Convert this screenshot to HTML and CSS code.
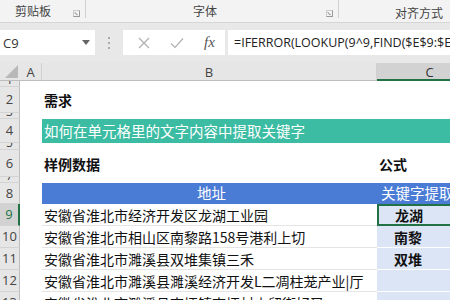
FILE: index.html
```html
<!DOCTYPE html>
<html lang="zh">
<head>
<meta charset="utf-8">
<link rel="stylesheet" href="styles.css">
</head>
<body>
<div class="app">
  <div class="ribbon">
    <div class="group g1"><span class="glabel">剪贴板</span><span class="launcher"></span></div>
    <div class="group g2"><span class="glabel">字体</span><span class="launcher"></span></div>
    <div class="group g3"><span class="glabel">对齐方式</span></div>
  </div>
  <div class="fbar">
    <div class="namebox"><span>C9</span><svg class="dd" width="8" height="5" viewBox="0 0 8 5"><path d="M0 0h8L4 5z" fill="#666"/></svg></div>
    <div class="dots"><i></i><i></i><i></i></div>
    <div class="fbtns">
      <svg width="12" height="12" viewBox="0 0 12 12"><path d="M1 1L11 11M11 1L1 11" stroke="#b0b0b0" stroke-width="1.2" fill="none"/></svg>
      <svg width="14" height="12" viewBox="0 0 14 12"><path d="M1 6.5L5 10.5L13 1.5" stroke="#b0b0b0" stroke-width="1.2" fill="none"/></svg>
      <span class="fx">fx</span>
    </div>
    <div class="finput">=IFERROR(LOOKUP(9^9,FIND($E$9:$E$11,B9),$E$9:$E$11),"")</div>
  </div>
  <div class="gap"></div>
  <div class="sheet">
    <div class="corner"><span class="tri"></span></div>
    <div class="ch">A</div>
    <div class="ch">B</div>
    <div class="ch sel">C</div>

    <div class="rh r1">1</div><div class="c"></div><div class="c"></div><div class="c"></div>
    <div class="rh">2</div><div class="c"></div><div class="c bold">需求</div><div class="c"></div>
    <div class="rh r1">3</div><div class="c"></div><div class="c"></div><div class="c"></div>
    <div class="rh">4</div><div class="c"></div><div class="c teal">如何在单元格里的文字内容中提取关键字</div><div class="c teal"></div>
    <div class="rh r1">5</div><div class="c"></div><div class="c"></div><div class="c"></div>
    <div class="rh">6</div><div class="c"></div><div class="c bold">样例数据</div><div class="c bold">公式</div>
    <div class="rh r1">7</div><div class="c"></div><div class="c"></div><div class="c"></div>
    <div class="rh">8</div><div class="c"></div><div class="c blue center">地址</div><div class="c blue">关键字提取</div>
    <div class="rh hl">9</div><div class="c"></div><div class="c data">安徽省淮北市经济开发区龙湖工业园</div><div class="c kw active">龙湖</div>
    <div class="rh">10</div><div class="c"></div><div class="c data">安徽省淮北市相山区南黎路158号港利上切</div><div class="c kw">南黎</div>
    <div class="rh">11</div><div class="c"></div><div class="c data">安徽省淮北市濉溪县双堆集镇三禾</div><div class="c kw">双堆</div>
    <div class="rh">12</div><div class="c"></div><div class="c data">安徽省淮北市濉溪县濉溪经济开发L二凋柱茏产业|厅</div><div class="c kw"></div>
    <div class="rh">13</div><div class="c"></div><div class="c data">安徽省淮北市濉溪县南坪镇南坪村内留街好又</div><div class="c kw"></div>
  </div>
</div>
</body>
</html>
```
FILE: styles.css
```css
* { box-sizing: border-box; }
html, body { margin: 0; padding: 0; }
body {
  width: 450px; height: 300px; overflow: hidden; background: #fff;
  font-family: "Noto Sans CJK SC", "Noto Sans", sans-serif;
}
.app { width: 450px; height: 300px; overflow: hidden; }

.ribbon {
  height: 23px; background: #f3f3f3; display: flex;
  border-bottom: 1px solid #d6d6d6;
}
.group { position: relative; height: 22px; display: flex; align-items: center; }
.g1 { width: 86px; border-right: 1px solid #d0d0d0; height: 18px; }
.g1 .glabel { margin-left: 15px; }
.g2 { width: 253px; border-right: 1px solid #d0d0d0; height: 18px; }
.g2 .glabel { margin-left: 107px; }
.g3 { flex: 1; }
.g3 .glabel { margin-left: 56px; }
.glabel { font-size: 12px; color: #444; line-height: 14px; margin-top: 4px; }
.launcher {
  position: absolute; right: 5px; top: 10px; width: 7px; height: 7px;
  border: 1px solid #999; border-top-color: #ccc; border-left-color: #ccc;
}
.launcher::after {
  content: ""; position: absolute; left: 1px; top: 1px; width: 4px; height: 1px;
  background: #999; transform: rotate(45deg); transform-origin: 0 0;
}

.fbar {
  height: 35px; background: #e8e8e8; display: flex; align-items: flex-end;
  padding-bottom: 3px;
}
.namebox {
  width: 95px; height: 25px; background: #fff; display: flex; align-items: center;
  justify-content: space-between; padding: 0 5px 0 3px;
  font-family: "Open Sans", "Noto Sans", sans-serif; font-size: 13px; color: #333;
}
.dots { width: 28px; height: 25px; display: flex; flex-direction: column; align-items: center; justify-content: center; gap: 3px; }
.dots i { display: block; width: 2px; height: 2px; background: #aaa; }
.fbtns {
  width: 102px; height: 25px; background: #fff; display: flex; align-items: center;
  gap: 20px; padding-left: 15px;
}
.fx { font-family: "Liberation Serif", serif; font-style: italic; font-size: 15px; color: #555; }
.finput {
  flex: 1; margin-left: 3px; height: 25px; background: #fff; white-space: nowrap; overflow: hidden;
  font-family: "Open Sans", "Noto Sans", sans-serif; font-size: 12.5px; color: #222;
  line-height: 25px; padding-left: 6px;
}
.gap { height: 5px; background: #e8e8e8; }

.sheet {
  display: grid;
  grid-template-columns: 20px 22px 335px 106px;
  grid-template-rows: 18px 6px 26px 6px 24px 7px 27px 6px 21px 22px 22px 22px 22px 22px;
}
.corner { background: #e6e6e6; border-bottom: 1px solid #bdbdbd; position: relative; }
.tri {
  position: absolute; right: 2px; bottom: 2px; width: 0; height: 0;
  border-left: 13px solid transparent; border-bottom: 13px solid #b8b8b8;
}
.ch {
  background: #e6e6e6; border-bottom: 1px solid #bdbdbd; border-right: 1px solid #d0d0d0;
  font-family: "Open Sans", "Noto Sans", sans-serif; font-size: 13px; color: #444;
  display: flex; align-items: center; justify-content: center;
}
.ch.sel { background: #d2d2d2; border-bottom: 2px solid #217346; color: #333; padding-top: 2px; }
.rh {
  background: #e6e6e6; border-right: 1px solid #bdbdbd; border-bottom: 1px solid #d4d4d4;
  font-family: "Open Sans", "Noto Sans", sans-serif; font-size: 13px; color: #444;
  display: flex; align-items: center; justify-content: center; overflow: hidden; line-height: 1;
}
.rh.r1 { align-items: flex-end; font-size: 12px; }
.rh.hl { background: #d2d2d2; color: #217346; border-right: 2px solid #217346; }
.c {
  font-size: 14px; color: #111; white-space: nowrap; overflow: hidden;
  display: flex; align-items: center; padding-left: 2px; line-height: 1;
}
.bold { font-weight: bold; }
.teal { background: #3cbca3; color: #fff; font-size: 14.5px; }
.blue { background: #4a7cd6; color: #fff; font-size: 14.5px; padding-left: 4px; }
.center { justify-content: center; }
.data { overflow: visible; border-bottom: 1px solid #e4e4e4; }
.kw {
  background: #dbe5f5; font-weight: bold; padding-left: 17px;
  border-bottom: 1px solid #fff;
}
.kw.active { border: 2px solid #217346; border-right: none; padding-left: 16px; }
```
